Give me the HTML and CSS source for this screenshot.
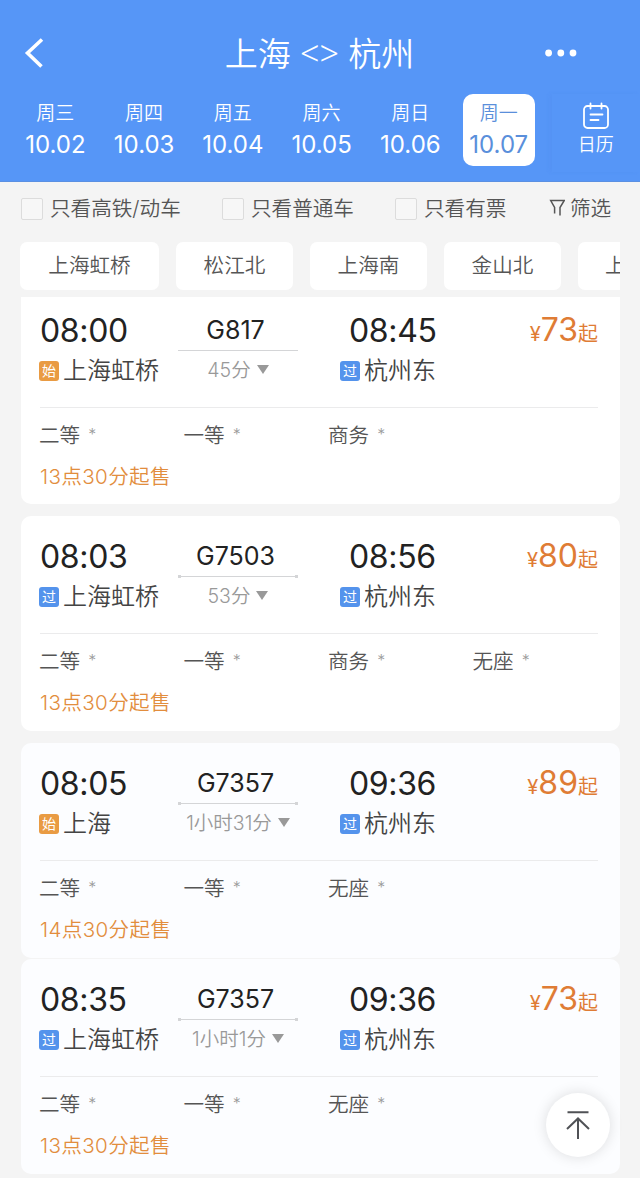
FILE: index.html
```html
<!DOCTYPE html>
<html lang="zh-CN">
<head>
<meta charset="utf-8">
<title>上海 - 杭州</title>
<link rel="stylesheet" href="styles.css">
</head>
<body>
<header class="header">
  <div class="titlebar">
    <svg class="back" viewBox="0 0 22 30" width="22" height="30"><path d="M20 1.5 5.5 15 19.5 28.5" fill="none" stroke="#fff" stroke-width="3.6"/></svg>
    <h1 class="title">上海 <span class="swap">&lt;&gt;</span> 杭州</h1>
    <svg class="more" viewBox="0 0 34 8" width="34" height="8" fill="#fff"><circle cx="4.6" cy="4" r="3.4"/><circle cx="16.8" cy="4" r="3.4"/><circle cx="29" cy="4" r="3.4"/></svg>
  </div>
  <nav class="dates">
    <div class="day"><span class="week">周三</span><span class="date">10.02</span></div>
    <div class="day"><span class="week">周四</span><span class="date">10.03</span></div>
    <div class="day"><span class="week">周五</span><span class="date">10.04</span></div>
    <div class="day"><span class="week">周六</span><span class="date">10.05</span></div>
    <div class="day"><span class="week">周日</span><span class="date">10.06</span></div>
    <div class="day active"><span class="week">周一</span><span class="date">10.07</span></div>
    <div class="calendar">
      <svg viewBox="0 0 28 28" width="28" height="28" fill="none" stroke="#fff" stroke-width="1.8" stroke-linecap="round"><rect x="2" y="4" width="24" height="22" rx="3.5"/><path d="M8.5 1.5v5M19.500 1.500v5M8.500 12.500h12M8.500 18h8"/></svg>
      <span>日历</span>
    </div>
  </nav>
</header>
<main class="content">
  <div class="filters">
    <label class="check check-fast"><i class="box"></i>只看高铁/动车</label>
    <label class="check check-slow"><i class="box"></i>只看普通车</label>
    <label class="check check-left"><i class="box"></i>只看有票</label>
    <span class="filter"><svg viewBox="0 0 16 18" width="16" height="18" fill="none" stroke="#555" stroke-width="1.5"><path d="M5.600 14.500V8.500L1.700 1.500H15.300L11 8.500V16.500"/></svg>筛选</span>
  </div>
  <div class="stations">
    <span class="chip chip-wide">上海虹桥</span><span class="chip">松江北</span><span class="chip">上海南</span><span class="chip">金山北</span><span class="chip chip-cut">上</span>
  </div>

  <section class="card card-first">
    <div class="trip">
      <div class="stop"><span class="time">08:00</span><span class="place"><i class="tag start">始</i>上海虹桥</span></div>
      <div class="train"><span class="number">G817</span><i class="line"></i><span class="duration">45分<i class="caret"></i></span></div>
      <div class="stop arrive"><span class="time">08:45</span><span class="place"><i class="tag">过</i>杭州东</span></div>
      <div class="price"><small class="yen">¥</small>73<small class="from">起</small></div>
    </div>
    <div class="seats"><span>二等<sup>*</sup></span><span>一等<sup>*</sup></span><span>商务<sup>*</sup></span></div>
    <div class="sale">13点30分起售</div>
  </section>

  <section class="card">
    <div class="trip">
      <div class="stop"><span class="time">08:03</span><span class="place"><i class="tag">过</i>上海虹桥</span></div>
      <div class="train"><span class="number">G7503</span><i class="line dotted"></i><span class="duration">53分<i class="caret"></i></span></div>
      <div class="stop arrive"><span class="time">08:56</span><span class="place"><i class="tag">过</i>杭州东</span></div>
      <div class="price"><small class="yen">¥</small>80<small class="from">起</small></div>
    </div>
    <div class="seats"><span>二等<sup>*</sup></span><span>一等<sup>*</sup></span><span>商务<sup>*</sup></span><span>无座<sup>*</sup></span></div>
    <div class="sale">13点30分起售</div>
  </section>

  <section class="card tinted">
    <div class="trip">
      <div class="stop"><span class="time">08:05</span><span class="place"><i class="tag start">始</i>上海</span></div>
      <div class="train"><span class="number">G7357</span><i class="line dotted"></i><span class="duration">1小时31分<i class="caret"></i></span></div>
      <div class="stop arrive"><span class="time">09:36</span><span class="place"><i class="tag">过</i>杭州东</span></div>
      <div class="price"><small class="yen">¥</small>89<small class="from">起</small></div>
    </div>
    <div class="seats"><span>二等<sup>*</sup></span><span>一等<sup>*</sup></span><span>无座<sup>*</sup></span></div>
    <div class="sale">14点30分起售</div>
  </section>

  <section class="card tinted joined">
    <div class="trip">
      <div class="stop"><span class="time">08:35</span><span class="place"><i class="tag">过</i>上海虹桥</span></div>
      <div class="train"><span class="number">G7357</span><i class="line dotted"></i><span class="duration">1小时1分<i class="caret"></i></span></div>
      <div class="stop arrive"><span class="time">09:36</span><span class="place"><i class="tag">过</i>杭州东</span></div>
      <div class="price"><small class="yen">¥</small>73<small class="from">起</small></div>
    </div>
    <div class="seats"><span>二等<sup>*</sup></span><span>一等<sup>*</sup></span><span>无座<sup>*</sup></span></div>
    <div class="sale">13点30分起售</div>
  </section>
</main>
<div class="to-top"><svg viewBox="0 0 26 30" width="26" height="30" fill="none" stroke="#505256" stroke-width="2"><path d="M2.500 2.200H23.500M13 29V8.500M2 19 13 8.500 24 19"/></svg></div>
</body>
</html>
```
FILE: styles.css
```css
* { box-sizing: border-box; }
body {
  margin: 0;
  width: 640px;
  height: 1178px;
  overflow: hidden;
  background: #f4f4f4;
  color: #555;
  font-family: Inter, "Noto Sans CJK SC", sans-serif;
  font-weight: 350;
}
i { font-style: normal; }
svg { display: block; flex: none; }

.header { height: 182px; background: #5696f7; color: #fff; border-bottom: 1px solid #5b90e2; }
.titlebar {
  display: grid;
  grid-template-columns: 60px 1fr 60px;
  align-items: center;
  height: 94px;
  padding: 14px 37px 0 22px;
}
.back { margin-top: -2px; }
.more { justify-self: end; margin: -2px 25px 0 0; }
.title { margin: 0; padding-left: 14px; text-align: center; font-size: 33px; line-height: 48px; font-weight: 350; white-space: nowrap; }
.swap { font-family: "Noto Sans", sans-serif; font-size: 34px; font-weight: 300; line-height: 30px; }
.dates { display: flex; padding-left: 11px; }
.day {
  display: flex;
  flex-direction: column;
  align-items: center;
  width: 88.75px;
  height: 72px;
  padding-top: 7px;
}
.week { font-size: 19px; line-height: 26px; }
.date { font-size: 24px; line-height: 36px; font-weight: 400; }
.day.active {
  width: 72px;
  margin-left: 8px;
  border-radius: 10px;
  background: #fff;
  color: #5a8fdb;
}
.calendar {
  display: flex;
  flex-direction: column;
  align-items: center;
  width: 88px;
  height: 78px;
  margin-left: 17px;
  padding-top: 8px;
  font-size: 18px;
  line-height: 29px;
  box-shadow: -3px 0 4px rgba(60, 110, 210, .06);
}

.content { padding: 0 20px 0 21px; }
.filters { display: flex; align-items: center; height: 52px; padding-top: 1px; font-size: 20.6px; line-height: 30px; white-space: nowrap; }
.check { display: flex; align-items: center; gap: 7px; }
.check-fast { width: 201px; }
.check-slow { width: 173px; }
.check-left { width: 154px; }
.box { width: 22px; height: 22px; border: 1.5px solid #dcdcdc; border-radius: 2px; background: #f7f7f7; }
.filter { display: flex; align-items: center; gap: 5px; }
.filter svg { margin-top: -2px; }
.stations { display: flex; gap: 17px; height: 48px; margin: 8px 0 7px -1px; overflow: hidden; }
.chip {
  flex: none;
  width: 117px;
  border-radius: 7px;
  background: #fff;
  text-align: center;
  font-size: 20.6px;
  line-height: 48px;
}
.chip-wide { width: 139px; }
.chip-cut { padding-left: 27px; text-align: left; }

.card {
  height: 215px;
  margin-bottom: 12px;
  padding: 21px 22px 0 19px;
  border-radius: 10px;
  background: #fff;
}
.card-first { height: 207px; padding-top: 14px; border-radius: 0 0 10px 10px; }
.tinted { background: #fcfdff; }
.joined { margin-top: -11px; }
.trip {
  display: grid;
  grid-template-columns: 138px 120px 42px 118px 1fr;
  height: 97px;
  border-bottom: 1px solid #ebebec;
}
.stop { display: flex; flex-direction: column; white-space: nowrap; }
.arrive { grid-column: 4; }
.time { padding-top: 1px; font-size: 32px; line-height: 38px; letter-spacing: -.35px; color: #222; font-weight: 400; }
.arrive .time { padding-left: 9px; }
.place { display: flex; align-items: center; height: 30px; margin: 6px 0 0 -1px; gap: 4px; font-size: 24px; line-height: 32px; color: #444; }
.arrive .place { margin-left: 0; }
.tag {
  width: 20px;
  height: 20px;
  border-radius: 3px;
  background: #5493ec;
  color: #fff;
  font-size: 14px;
  font-weight: 400;
  line-height: 20px;
  text-align: center;
}
.start { background: #e99b43; }
.train { display: flex; flex-direction: column; align-items: center; }
.number { padding-right: 5px; font-size: 25px; line-height: 39px; color: #222; font-weight: 400; }
.line { width: 120px; height: 1px; background: #d4d5d7; }
.dotted {
  height: 3px;
  margin: -1px 0;
  background:
    radial-gradient(circle, #d4d5d7 1.5px, transparent 1.6px) 0 0 / 3px 3px no-repeat,
    radial-gradient(circle, #d4d5d7 1.5px, transparent 1.6px) 100% 0 / 3px 3px no-repeat,
    linear-gradient(#d4d5d7, #d4d5d7) 0 1px / 100% 1px no-repeat;
}
.duration { display: flex; align-items: center; gap: 6px; margin-top: 5px; font-size: 19.500px; line-height: 28px; color: #999; white-space: nowrap; }
.caret { margin-top: -1px; border: 6px solid transparent; border-top: 9px solid #999; border-bottom: 0; }
.price { grid-column: 5; padding-top: 1px; text-align: right; font-size: 32px; line-height: 36px; font-weight: 400; color: #df7c35; white-space: nowrap; }
.price small { font-size: 20px; }
.seats { display: grid; grid-template-columns: repeat(4, 144.5px); height: 28px; margin: 13px 0 0 -1px; font-size: 20.6px; line-height: 30px; }
.seats sup { margin-left: 8px; font-size: 16px; line-height: 0; vertical-align: 3px; color: #999; }
.sale { margin-top: 14px; font-size: 20.6px; line-height: 28px; letter-spacing: .35px; color: #e28d3d; }

.to-top {
  position: absolute;
  left: 546px;
  top: 1093px;
  display: grid;
  place-items: center;
  width: 64px;
  height: 64px;
  border-radius: 50%;
  background: #fff;
  box-shadow: 0 0 14px rgba(0, 0, 0, .13);
}
```
